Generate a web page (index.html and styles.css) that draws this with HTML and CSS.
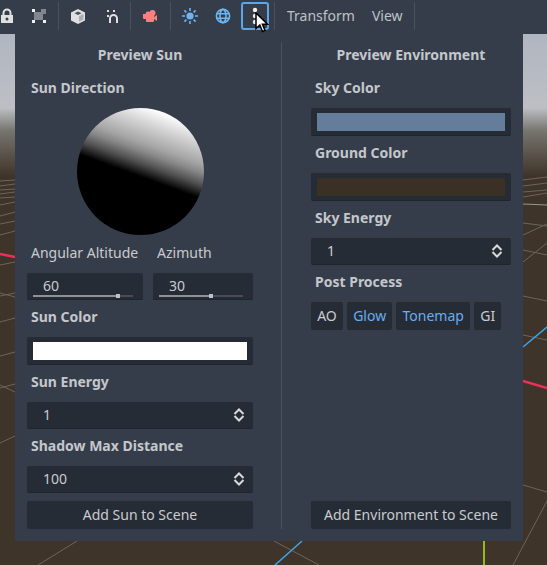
FILE: index.html
```html
<!DOCTYPE html>
<html lang="en">
<head>
    <meta charset="UTF-8">
    <title>Preview Settings</title>
    <link rel="stylesheet" href="styles.css">
</head>
<body>
    <div id="editor">
        <div class="toolbar">
            <div class="tool tool-lock">
                <svg width="14" height="16" viewBox="0 0 14 16"><path fill="none" stroke="#e0e0e0" stroke-width="2" d="M3.5 8V5a3.5 3.5 0 0 1 7 0v3"/><path fill="#e0e0e0" fill-rule="evenodd" d="M1 7h12v8H1zM7 9.5a1.5 1.5 0 1 0 0 3a1.5 1.5 0 0 0 0-3z"/></svg>
            </div>
            <div class="tool">
                <svg width="14" height="14" viewBox="0 0 14 14"><path fill="#82868e" d="M2 3h7V0h5v5h-3v6H2z"/><path fill="#f0f0f0" d="M0 0h3v3H0zM0 11h3v3H0zM11 11h3v3h-3z"/></svg>
            </div>
            <div class="sep"></div>
            <div class="tool">
                <svg width="14" height="15" viewBox="0 0 14 15"><path fill="#e0e0e0" d="M7 0l7 3.5v8L7 15l-7-3.5v-8z"/><path fill="#4c5360" d="M3.5 4.2L7 2.5l3.5 1.7L7 6z"/><path fill="#a9acb2" d="M8 7.2l4.5-2.2v5.5L8 12.8z"/></svg>
            </div>
            <div class="tool">
                <svg width="14" height="14" viewBox="0 0 14 14"><path fill="none" stroke="#e0e0e0" stroke-width="2" d="M6 14V9.500a3.500 3.500 0 0 1 7 0V14"/><path fill="#e0e0e0" d="M3 1h2v2H3zM9 1h2v2H9zM3 6h2v2H3z"/></svg>
            </div>
            <div class="sep"></div>
            <div class="tool tool-cam">
                <svg width="14" height="12" viewBox="0 0 14 12"><circle cx="9.500" cy="3" r="3" fill="#fc7f7f"/><circle cx="5" cy="4" r="2.500" fill="#fc7f7f"/><path fill="#fc7f7f" d="M0 4h3v5H1a1 1 0 0 1-1-1zM3 5h8v6a1 1 0 0 1-1 1H4a1 1 0 0 1-1-1zM11 7l3-2v6l-3-2z"/></svg>
            </div>
            <div class="sep"></div>
            <div class="tool">
                <svg width="16" height="16" viewBox="0 0 16 16"><circle cx="8" cy="8" r="3.600" fill="#6fb4ef"/><path stroke="#6fb4ef" stroke-width="1.600" d="M8 0v3M8 13v3M0 8h3M13 8h3M2.400 2.400l2 2M11.600 11.600l2 2M13.600 2.400l-2 2M4.400 11.600l-2 2"/></svg>
            </div>
            <div class="tool">
                <svg width="16" height="16" viewBox="0 0 16 16"><g fill="none" stroke="#6fb4ef" stroke-width="1.600"><circle cx="8" cy="8" r="6.600"/><ellipse cx="8" cy="8" rx="3" ry="6.600"/><path d="M1.500 5.800h13M1.500 10.200h13"/></g></svg>
            </div>
            <div class="tool tool-focus">
                <svg width="6" height="18" viewBox="0 0 6 18"><circle cx="3" cy="3" r="2.200" fill="#f0f0f0"/><circle cx="3" cy="9" r="2.200" fill="#f0f0f0"/><circle cx="3" cy="15" r="2.200" fill="#f0f0f0"/></svg>
            </div>
            <div class="sep sep-after-focus"></div>
            <div class="menu">Transform</div>
            <div class="menu">View</div>
            <div class="sep sep-last"></div>
        </div>

        <svg class="scene" width="547" height="531" viewBox="0 34 547 531">
            <defs>
                <linearGradient id="sky" x1="0" y1="0" x2="0" y2="1">
                    <stop offset="0" stop-color="#b0b6c0"/>
                    <stop offset="0.52" stop-color="#bdbfc4"/>
                    <stop offset="0.68" stop-color="#77756f"/>
                    <stop offset="1" stop-color="#3f3429"/>
                </linearGradient>
            </defs>
            <rect x="0" y="34" width="547" height="531" fill="#3f3429"/>
            <rect x="0" y="34" width="547" height="142" fill="url(#sky)"/>
            <g stroke="#6b655b" stroke-width="1" fill="none">
                <path d="M0 181L15 180M0 186L15 184M0 190L15 189M0 194L15 192M0 198L15 197M0 205L15 202M0 216L15 212M0 224L15 221M0 235L15 231"/>
                <path d="M0 265L15 262M0 296L15 293M0 322L15 318M0 356L15 352M0 388L15 384M0 443L15 436M0 385L15 392M0 293L15 297"/>
                <path d="M523 180L547 177M523 186L547 183M523 192L547 190M523 197L547 193M523 223L547 226M523 250L547 255M523 296L547 301M523 335L547 340M523 485L547 492"/>
                <path d="M523 235L547 224M523 262L547 243M547 501L513 565M77 541L38 565M274 541L319 565"/>
                <path stroke="#9a968e" d="M523 204L547 205"/>
            </g>
            <path stroke="#3aa6f0" stroke-width="1.500" fill="none" d="M523 347L547 327M302 541L275 565"/>
            <path stroke="#e8305a" stroke-width="2.500" fill="none" d="M523 381L547 388M0 254L15 257"/>
            <path stroke="#b5e61d" stroke-width="1.500" fill="none" d="M484 541V565"/>
        </svg>

        <div class="popup">
            <div class="col col-sun">
                <div class="title">Preview Sun</div>
                <div class="label">Sun Direction</div>
                <div class="sphere"></div>
                <div class="pair-labels">
                    <div class="plain-label alt-label">Angular Altitude</div>
                    <div class="plain-label">Azimuth</div>
                </div>
                <div class="pair">
                    <div class="field slider slider-alt">
                        <span class="value">60</span>
                        <div class="track"><div class="fill fill-alt"></div><div class="grab"></div></div>
                    </div>
                    <div class="field slider slider-az">
                        <span class="value">30</span>
                        <div class="track"><div class="fill fill-az"></div><div class="grab"></div></div>
                    </div>
                </div>
                <div class="label">Sun Color</div>
                <div class="field swatch"><div class="swatch-color sun-color"></div></div>
                <div class="label">Sun Energy</div>
                <div class="field spin">
                    <span class="value">1</span>
                    <svg width="12" height="14" viewBox="0 0 12 14"><path fill="none" stroke="#d8d9dc" stroke-width="2" d="M1.500 6L6 1.500L10.500 6M1.500 8L6 12.500L10.500 8"/></svg>
                </div>
                <div class="label">Shadow Max Distance</div>
                <div class="field spin">
                    <span class="value">100</span>
                    <svg width="12" height="14" viewBox="0 0 12 14"><path fill="none" stroke="#d8d9dc" stroke-width="2" d="M1.500 6L6 1.500L10.500 6M1.500 8L6 12.500L10.500 8"/></svg>
                </div>
                <div class="btn btn-wide">Add Sun to Scene</div>
            </div>
            <div class="divider"></div>
            <div class="col col-env">
                <div class="title">Preview Environment</div>
                <div class="label">Sky Color</div>
                <div class="field swatch"><div class="swatch-color sky-color"></div></div>
                <div class="label">Ground Color</div>
                <div class="field swatch"><div class="swatch-color ground-color"></div></div>
                <div class="label">Sky Energy</div>
                <div class="field spin">
                    <span class="value">1</span>
                    <svg width="12" height="14" viewBox="0 0 12 14"><path fill="none" stroke="#d8d9dc" stroke-width="2" d="M1.500 6L6 1.500L10.500 6M1.500 8L6 12.500L10.500 8"/></svg>
                </div>
                <div class="label">Post Process</div>
                <div class="toggles">
                    <div class="btn toggle">AO</div>
                    <div class="btn toggle on">Glow</div>
                    <div class="btn toggle on">Tonemap</div>
                    <div class="btn toggle">GI</div>
                </div>
                <div class="btn btn-wide">Add Environment to Scene</div>
            </div>
        </div>

        <svg class="cursor" width="16" height="22" viewBox="0 0 16 22"><path fill="#fff" stroke="#000" stroke-width="1.500" d="M1 1V16.500L4.800 13L7.500 19.500L10 18.400L7.400 12.300H12.500z"/></svg>
    </div>
</body>
</html>
```

FILE: styles.css
```css
body {
    margin: 0;
    font-family: "Noto Sans", sans-serif;
    font-size: 14px;
    line-height: 20px;
    color: #c9cbcf;
    background-color: #3f3429;
}

#editor {
    position: relative;
    width: 547px;
    height: 565px;
    overflow: hidden;
}

.toolbar {
    display: flex;
    align-items: center;
    height: 32px;
    padding-bottom: 2px;
    background-color: #353d4a;
}

.tool {
    display: flex;
    align-items: center;
    justify-content: center;
    width: 32px;
    height: 28px;
    margin-right: 1px;
}

.tool-lock {
    width: 14px;
    margin-right: 9px;
}

.tool-cam {
    margin-right: 2px;
}

.tool-focus {
    box-sizing: border-box;
    width: 28px;
    margin-left: 1px;
    border: 2px solid #5da6e8;
    border-radius: 3px;
}

.sep {
    width: 1px;
    height: 28px;
    margin: 0 3px 0 2px;
    background-color: #4a515e;
}

.sep-after-focus {
    margin-left: 4px;
}

.sep-last {
    margin-left: 3px;
}

.menu {
    padding: 0 8px 0 9px;
    color: #bfc2c7;
}

.scene {
    position: absolute;
    top: 34px;
    left: 0;
}

.popup {
    position: absolute;
    top: 30px;
    left: 15px;
    box-sizing: border-box;
    display: flex;
    width: 508px;
    height: 511px;
    padding: 12px;
    background-color: #363d4a;
}

.col {
    display: flex;
    flex-direction: column;
}

.col-sun {
    width: 226px;
}

.col-env {
    width: 200px;
}

.divider {
    width: 1px;
    margin: 0 29px 0 28px;
    background-color: #4a515e;
}

.title {
    padding-top: 3px;
    margin-bottom: 13px;
    font-weight: 700;
    text-align: center;
    color: #c4c7cc;
}

.label {
    padding-left: 4px;
    margin-bottom: 10px;
    font-weight: 700;
    color: #c4c7cc;
}

.sphere {
    width: 127px;
    height: 127px;
    margin: 0 0 8px 50px;
    border-radius: 50%;
    background: linear-gradient(20deg, #000 47%, #505050 55%, #888 62%, #a5a5a5 67%, #d8d8d8 80%, #fff 89%);
}

.pair-labels {
    display: flex;
    margin-bottom: 10px;
}

.plain-label {
    padding-left: 4px;
}

.alt-label {
    width: 122px;
}

.pair {
    display: flex;
    gap: 10px;
}

.field {
    box-sizing: border-box;
    height: 27px;
    margin-bottom: 7px;
    background-color: #262c36;
    border-bottom: 1px solid #1f242d;
    border-radius: 2px;
}

.slider {
    position: relative;
    padding: 3px 0 0 16px;
}

.slider-alt {
    width: 116px;
}

.slider-az {
    width: 100px;
}

.value {
    color: #c9cbcf;
}

.track {
    position: absolute;
    left: 6px;
    right: 10px;
    bottom: 2px;
    height: 2px;
    background-color: #474c57;
}

.fill {
    height: 2px;
    background-color: #8f9197;
}

.fill-alt {
    width: 85%;
}

.fill-az {
    width: 61%;
}

.grab {
    position: absolute;
    top: -1px;
    width: 4px;
    height: 4px;
    background-color: #c0c1c4;
}

.slider-alt .grab {
    left: 83%;
}

.slider-az .grab {
    left: 59%;
}

.swatch {
    height: 28px;
    padding: 5px 6px;
}

.swatch-color {
    height: 18px;
}

.sun-color {
    background-color: #fff;
}

.sky-color {
    background-color: #647d9b;
}

.ground-color {
    background-color: #3a3024;
}

.spin {
    display: flex;
    align-items: center;
    justify-content: space-between;
    padding: 0 8px 0 16px;
}

.btn {
    box-sizing: border-box;
    height: 28px;
    line-height: 27px;
    text-align: center;
    background-color: #262c36;
    border-radius: 2px;
    color: #c9cbcf;
}

.btn-wide {
    margin-top: auto;
}

.toggles {
    display: flex;
    gap: 4px;
}

.toggle {
    padding: 0 6.2px;
}

.on {
    color: #66aef0;
}

.cursor {
    position: absolute;
    top: 12px;
    left: 255px;
}
```
